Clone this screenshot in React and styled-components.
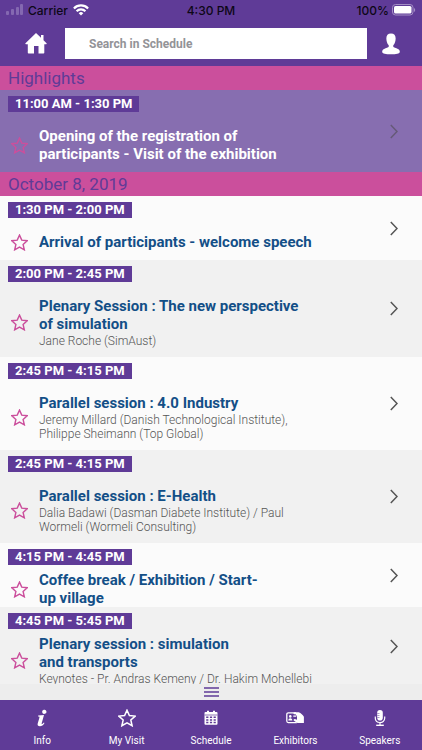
import React, { useState } from 'react';
import styled, { createGlobalStyle, css } from 'styled-components';

const purple = '#5f3b97';
const pink = '#cb4f9c';
const blue = '#134f87';

const GlobalStyle = createGlobalStyle`
  * {
    box-sizing: border-box;
  }

  body {
    margin: 0;
    font-family: Roboto, sans-serif;
    background: #fbfbfb;
  }

  button {
    padding: 0;
    border: 0;
    background: none;
    font: inherit;
    cursor: pointer;
  }

  svg {
    display: block;
  }
`;

const Screen = styled.div`
  display: flex;
  flex-direction: column;
  height: 100vh;
`;

const StatusBar = styled.div`
  display: grid;
  grid-template-columns: 1fr auto 1fr;
  align-items: center;
  height: 20px;
  padding: 0 6px;
  background: ${purple};
  color: #0d0716;
  font-family: Inter, sans-serif;
  font-size: 12px;
  font-weight: 500;
`;

const StatusGroup = styled.div`
  display: flex;
  align-items: center;
  gap: ${props => props.$gap}px;
  justify-content: ${props => (props.$end ? 'flex-end' : 'flex-start')};
`;

const Header = styled.header`
  display: flex;
  align-items: center;
  gap: 15px;
  padding: 8px 22px 7px;
  background: ${purple};
`;

const IconButton = styled.button`
  display: flex;
  justify-content: center;
  width: ${props => props.$width}px;
  color: #fff;
`;

const SearchInput = styled.input`
  flex: 1;
  min-width: 0;
  height: 31px;
  padding: 0 24px;
  border: 0;
  border-radius: 0;
  background: #fff;
  font-family: inherit;
  font-size: 12px;
  font-weight: 700;
  color: #555;

  &::placeholder {
    color: #939397;
    opacity: 1;
  }
`;

const Main = styled.main`
  flex: 1;
  min-height: 0;
  overflow-y: auto;
  scrollbar-width: none;
`;

const SectionTitle = styled.h2`
  margin: 0;
  padding: 0 8px;
  background: ${pink};
  color: ${purple};
  font-size: 17px;
  font-weight: 400;
  line-height: 24px;
`;

const SessionList = styled.ul`
  margin: 0;
  padding: 0;
  list-style: none;
`;

const Time = styled.time`
  display: block;
  width: fit-content;
  height: 16px;
  padding: 0 7px;
  background: ${purple};
  color: #fff;
  font-size: 13px;
  font-weight: 700;
  line-height: 16px;
`;

const SessionBody = styled.div`
  display: flex;
  align-items: center;
  gap: 11px;
  padding: 15px 0 9px 3px;
`;

const StarButton = styled.button`
  flex: none;
  width: 17px;
  color: ${pink};
`;

const SessionTitle = styled.h3`
  margin: 0;
  color: ${blue};
  font-size: 15px;
  font-weight: 700;
  line-height: 18px;
  white-space: pre-line;
`;

const Speakers = styled.p`
  margin: 1px 0 0;
  color: #555;
  font-size: 12px;
  font-weight: 300;
  line-height: 14px;
`;

const OpenButton = styled.button`
  margin: 0 0 6px auto;
  color: #555;
`;

const SessionItem = styled.li`
  display: flex;
  align-items: center;
  padding: 6px 24px 0 8px;
  background: #fbfbfb;

  &:nth-child(even) {
    background: #f1f1f1;
  }

  ${props => props.$compact && css`
    ${SessionBody} {
      padding-top: 6px;
      padding-bottom: 0;
    }
  `}

  ${props => props.$highlight && css`
    background: #876eb0;

    ${SessionTitle} {
      color: #fff;
    }

    ${OpenButton} {
      color: #665a78;
    }
  `}
`;

const SessionContent = styled.div`
  flex: 1;
  max-width: 320px;
`;

const PullBar = styled.button`
  display: flex;
  flex: none;
  justify-content: center;
  align-items: center;
  height: 16px;
  background: #ededed;
  color: ${purple};
`;

const TabBar = styled.nav`
  display: flex;
  flex: none;
  height: 50px;
  background: ${purple};
`;

const Tab = styled.a`
  display: flex;
  flex: 1 1 0;
  flex-direction: column;
  align-items: center;
  gap: 7px;
  padding-top: 9px;
  color: #fff;
  font-size: 10px;
  line-height: 14px;
  text-decoration: none;
`;

const starPath = 'M12 1.6l3.2 7.1 7.7.8-5.8 5.2 1.7 7.6-6.8-3.9-6.8 3.9 1.7-7.6L1.1 9.5l7.7-.8z';

const Star = ({ size = 17 }) => (
  <svg width={size} height={size} viewBox="0 0 24 24" fill="none" stroke="currentColor" strokeWidth="2">
    <path d={starPath} />
  </svg>
);

const Signal = () => (
  <svg width="17" height="12" viewBox="0 0 17 12" fill="#8468b1">
    <rect x="0" y="7" width="3" height="4" rx="1" />
    <rect x="5" y="5" width="3" height="6" rx="1" />
    <rect x="10" y="3" width="3" height="8" rx="1" />
    <rect x="14" y="0" width="3" height="11" rx="1" />
  </svg>
);

const Wifi = () => (
  <svg width="16" height="12" viewBox="0 0 16 12" fill="none" stroke="#fff" strokeWidth="2.2">
    <path d="M.9 4.4a10 10 0 0 1 14.2 0" />
    <path d="M3.6 7.2a6.2 6.2 0 0 1 8.8 0" />
    <path d="M8 11.6L5.7 9.3a3.2 3.2 0 0 1 4.6 0z" fill="#fff" stroke="none" />
  </svg>
);

const Battery = () => (
  <svg width="24" height="12" viewBox="0 0 24 12">
    <rect x=".5" y=".5" width="20.5" height="10.5" rx="3" fill="none" stroke="#a48fc5" />
    <rect x="2" y="2" width="17.5" height="7.5" rx="1.6" fill="#fff" />
    <path d="M22 4v4c1.6-.6 1.6-3.4 0-4z" fill="#a48fc5" />
  </svg>
);

const Home = () => (
  <svg width="22" height="21" viewBox="0 0 22 21" fill="currentColor">
    <path d="M11 0l5 4.800V2h2.500v5.200l3.300 3.300-.5.700h-2v8.500q0 .8-.8.800h-5v-7.500h-4.500v7.500H3.600q-.8 0-.8-.8v-8.500H.8l-.6-.7z" />
  </svg>
);

const User = () => (
  <svg width="18" height="22" viewBox="0 0 19 22" fill="currentColor">
    <path d="M9.500 0c3.300 0 5 2 4.900 5.200-.1 2.900-.8 5.500-2.500 7v1.700c.3 1 3 1.400 4.900 2.300 1.600.8 2 1.800 2 3.200 0 1.700-4 2.500-9.300 2.500S.2 21.100.2 19.400c0-1.400.4-2.400 2-3.200 1.900-.9 4.600-1.300 4.900-2.300v-1.700c-1.700-1.500-2.400-4.100-2.500-7C4.500 2 6.200 0 9.500 0z" />
  </svg>
);

const Chevron = () => (
  <svg width="8" height="15" viewBox="0 0 8 15" fill="none" stroke="currentColor" strokeWidth="1.5">
    <path d="M.8 1l6.200 6.500L.8 14" />
  </svg>
);

const Bars = () => (
  <svg width="15" height="10" viewBox="0 0 15 10" fill="none" stroke="currentColor" strokeWidth="1.4">
    <path d="M0 1h15M0 5h15M0 9h15" />
  </svg>
);

const Info = () => (
  <svg width="18" height="18" viewBox="0 0 18 18" fill="currentColor">
    <ellipse cx="11.3" cy="2.8" rx="2.2" ry="2.1" transform="rotate(-15 11.3 2.8)" />
    <path d="M5.200 6.600l5.800-.5-2.300 8.200c-.2.800.1 1 .6.700.6-.3 1.100-.9 1.600-1.500l.6.400c-1.200 2.100-2.700 3.300-4.600 3.300-1.800 0-2.700-1-2.200-2.700l1.700-5.700c.2-.8 0-1.100-.6-1.200l-.8-.1z" />
  </svg>
);

const Calendar = () => (
  <svg width="18" height="18" viewBox="0 0 18 18">
    <path d="M2.500 4q0-1 1-1h11q1 0 1 1v10.700q0 1-1 1h-11q-1 0-1-1z" fill="#fff" />
    <path d="M5 1.800h2v2.500H5zM11 1.800h2v2.500h-2z" fill="#fff" />
    <path d="M2.500 6h13" stroke={purple} strokeWidth=".7" />
    <path
      d="M4.200 7.600h2.200v1.500H4.200zM7.900 7.600h2.200v1.500H7.900zM11.600 7.600h2.200v1.500h-2.200zM4.200 10.200h2.200v1.500H4.200zM7.900 10.200h2.200v1.500H7.900zM11.600 10.200h2.200v1.500h-2.200zM4.200 12.800h2.200v1.500H4.200zM7.900 12.800h2.200v1.500H7.900zM11.600 12.800h2.200v1.500h-2.200z"
      fill={purple}
    />
  </svg>
);

// badge held by a hand
const Badge = () => (
  <svg width="18" height="18" viewBox="0 0 18 18">
    <path d="M10 3.800H2.300Q.8 3.800.8 5.300v6.800q0 1.500 1.500 1.500h8.500" fill="none" stroke="#fff" strokeWidth="1.3" />
    <circle cx="4.3" cy="7.4" r="1.3" fill="#fff" />
    <path d="M2.300 11.600c0-3 4-3 4 0zM7.300 6.500h3v1.200h-3z" fill="#fff" />
    <path d="M8.200 3.300h4.500c1 0 4.800 3 5.200 4.500v6.300h-6.400L8 11.800c-1-.9.200-2.200 1.400-1.600l1.600.5V7.200L9.600 5.300H8.200c-1 0-1-2 0-2z" fill="#fff" />
  </svg>
);

const Mic = () => (
  <svg width="18" height="18" viewBox="0 0 18 18" fill="none" stroke="#fff">
    <rect x="6.2" y="1" width="5.6" height="10.5" rx="2.8" fill="#fff" stroke="none" />
    <path d="M4.300 7.500v1.800c0 5.600 9.400 5.600 9.400 0V7.500M9 13.500V16" strokeWidth="1.2" />
    <path d="M5.200 16.300h7.600" strokeWidth="1.4" />
    <path d="M6.300 4.500h2.200M6.300 6.500h2.200M6.300 8.500h2.200" stroke={purple} strokeWidth=".5" />
  </svg>
);

const sections = [
  {
    title: 'Highlights',
    highlight: true,
    sessions: [
      {
        time: '11:00 AM - 1:30 PM',
        title: 'Opening of the registration of\nparticipants - Visit of the exhibition',
      },
    ],
  },
  {
    title: 'October 8, 2019',
    sessions: [
      { time: '1:30 PM - 2:00 PM', title: 'Arrival of participants - welcome speech' },
      {
        time: '2:00 PM - 2:45 PM',
        title: 'Plenary Session : The new perspective\nof simulation',
        speakers: 'Jane Roche (SimAust)',
      },
      {
        time: '2:45 PM - 4:15 PM',
        title: 'Parallel session : 4.0 Industry',
        speakers: 'Jeremy Millard (Danish Technological Institute), Philippe Sheimann (Top Global)',
      },
      {
        time: '2:45 PM - 4:15 PM',
        title: 'Parallel session : E-Health',
        speakers: 'Dalia Badawi (Dasman Diabete Institute) / Paul Wormeli (Wormeli Consulting)',
      },
      { time: '4:15 PM - 4:45 PM', title: 'Coffee break / Exhibition / Start-\nup village', compact: true },
      {
        time: '4:45 PM - 5:45 PM',
        title: 'Plenary session : simulation\nand transports',
        speakers: 'Keynotes - Pr. Andras Kemeny / Dr. Hakim Mohellebi',
        compact: true,
      },
    ],
  },
];

const tabs = [
  { label: 'Info', icon: <Info /> },
  { label: 'My Visit', icon: <Star size={18} /> },
  { label: 'Schedule', icon: <Calendar /> },
  { label: 'Exhibitors', icon: <Badge /> },
  { label: 'Speakers', icon: <Mic /> },
];

const Session = ({ session, highlight }) => (
  <SessionItem $highlight={highlight} $compact={session.compact}>
    <SessionContent>
      <Time>{session.time}</Time>
      <SessionBody>
        <StarButton aria-label="Add to my visit"><Star /></StarButton>
        <div>
          <SessionTitle>{session.title}</SessionTitle>
          {session.speakers && <Speakers>{session.speakers}</Speakers>}
        </div>
      </SessionBody>
    </SessionContent>
    <OpenButton aria-label="Open session"><Chevron /></OpenButton>
  </SessionItem>
);

const App = () => {
  const [search, setSearch] = useState('');

  return (
    <Screen>
      <GlobalStyle />
      <StatusBar>
        <StatusGroup $gap={5}>
          <Signal />
          <span>Carrier</span>
          <Wifi />
        </StatusGroup>
        <span>4:30 PM</span>
        <StatusGroup $gap={3} $end>
          <span>100%</span>
          <Battery />
        </StatusGroup>
      </StatusBar>
      <Header>
        <IconButton $width={28} aria-label="Home"><Home /></IconButton>
        <SearchInput
          type="text"
          aria-label="Search in Schedule"
          placeholder="Search in Schedule"
          value={search}
          onChange={e => setSearch(e.target.value)}
        />
        <IconButton $width={18} aria-label="Profile"><User /></IconButton>
      </Header>
      <Main>
        {sections.map(section => (
          <section key={section.title}>
            <SectionTitle>{section.title}</SectionTitle>
            <SessionList>
              {section.sessions.map(session => (
                <Session key={session.title} session={session} highlight={section.highlight} />
              ))}
            </SessionList>
          </section>
        ))}
      </Main>
      <PullBar aria-label="More"><Bars /></PullBar>
      <TabBar>
        {tabs.map(tab => (
          <Tab key={tab.label} href="#">
            {tab.icon}
            {tab.label}
          </Tab>
        ))}
      </TabBar>
    </Screen>
  );
};

export default App;
